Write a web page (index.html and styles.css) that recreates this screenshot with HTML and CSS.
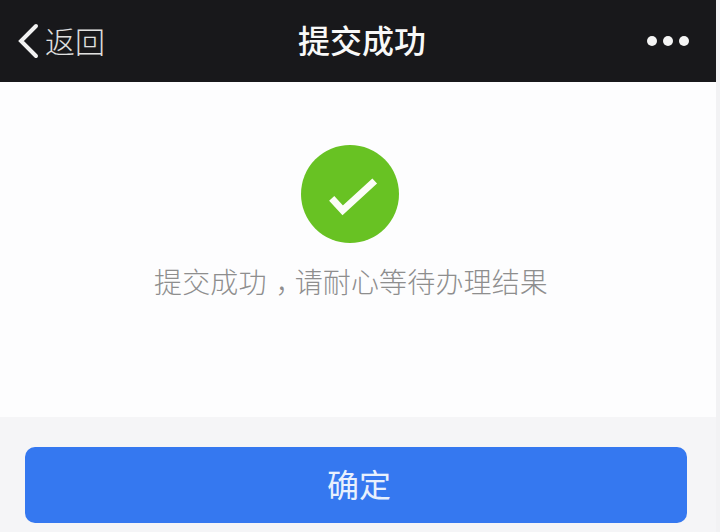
FILE: index.html
```html
<!DOCTYPE html>
<html lang="zh-CN">
<head>
<meta charset="utf-8">
<title>提交成功</title>
<link rel="stylesheet" href="styles.css">
</head>
<body>
<div class="page">
  <header class="nav">
    <div class="back">
      <svg class="back-icon" width="22" height="36" viewBox="0 0 22 36"><path d="M19 3 L4 18 L19 33" fill="none" stroke="#f2f2f2" stroke-width="4" stroke-linecap="round" stroke-linejoin="miter"/></svg>
      <span class="back-text">返回</span>
    </div>
    <h1 class="title">提交成功</h1>
    <div class="more"><i class="dot"></i><i class="dot"></i><i class="dot"></i></div>
  </header>
  <main class="content">
    <svg class="status" width="98" height="98" viewBox="0 0 98 98">
      <circle cx="49" cy="49" r="49" fill="#68c223"/>
      <path d="M30.7 53.3 L41.7 65.3 L73.7 36" fill="none" stroke="#fbfdf8" stroke-width="7"/>
    </svg>
    <p class="message">提交成功<span class="comma">，</span>请耐心等待办理结果</p>
  </main>
  <footer class="footer">
    <button class="confirm">确定</button>
  </footer>
</div>
</body>
</html>
```

FILE: styles.css
```css
html, body {
  margin: 0;
  padding: 0;
  background: #f2f2f4;
}
body {
  font-family: "Noto Sans CJK SC", "Liberation Sans", sans-serif;
}
.page {
  width: 716px;
  height: 532px;
  display: flex;
  flex-direction: column;
  overflow: hidden;
}
.nav {
  height: 82px;
  box-sizing: border-box;
  padding: 0 27px 0 17px;
  background: #18181b;
  display: grid;
  grid-template-columns: 1fr auto 1fr;
  align-items: center;
  color: #fff;
}
.back {
  display: flex;
  align-items: center;
  gap: 6px;
}
.back-icon {
  display: block;
}
.back-text {
  font-size: 30px;
  line-height: 40px;
  margin-bottom: 3px;
  font-weight: 300;
  color: #e0e0e0;
}
.title {
  margin: 0 0 4px 18px;
  font-size: 32px;
  line-height: 44px;
  font-weight: 500;
  color: #f8f8f8;
}
.more {
  display: flex;
  justify-content: flex-end;
  gap: 6px;
}
.dot {
  width: 10px;
  height: 10px;
  border-radius: 50%;
  background: #f4f4f4;
}
.content {
  height: 335px;
  background: #fdfdfe;
  display: flex;
  flex-direction: column;
  align-items: center;
  padding: 63px 16px 0 0;
  box-sizing: border-box;
}
.status {
  display: block;
}
.message {
  margin: 18px 0 0 2px;
  font-size: 28px;
  line-height: 40px;
  font-weight: 300;
  letter-spacing: 0.15px;
  color: #8e8e8e;
  white-space: nowrap;
}
.comma {
  padding-left: 9px;
  letter-spacing: -9px;
}
.footer {
  flex: 1;
  background: #f5f5f7;
  padding: 30px 29px 9px 25px;
  display: flex;
}
.confirm {
  flex: 1;
  border: none;
  border-radius: 10px;
  background: #3578f0;
  color: #e8f0fd;
  font-family: inherit;
  font-size: 32px;
  padding: 0 0 4px 6px;
}
```
